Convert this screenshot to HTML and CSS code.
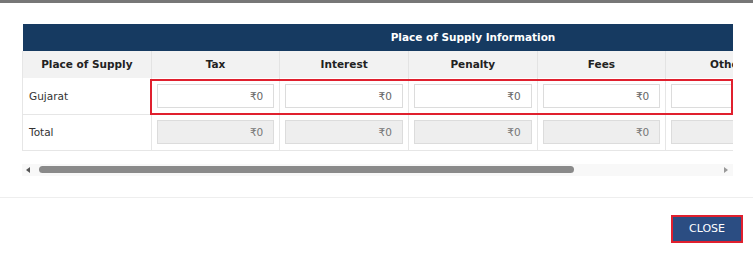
FILE: index.html
```html
<!DOCTYPE html>
<html lang="en">
<head>
  <meta charset="UTF-8">
  <meta name="viewport" content="width=device-width, initial-scale=1.0">
  <title>Place of Supply Information</title>
  <link rel="stylesheet" href="styles.css">
</head>
<body>
  <div class="topbar"></div>

  <div class="modal-body">
    <div class="table-wrap">
      <table class="pos-table">
        <thead>
          <tr>
            <th class="title" colspan="7">Place of Supply Information</th>
          </tr>
          <tr class="cols">
            <th class="first">Place of Supply</th>
            <th>Tax</th>
            <th>Interest</th>
            <th>Penalty</th>
            <th>Fees</th>
            <th>Others</th>
            <th>Total</th>
          </tr>
        </thead>
        <tbody>
          <tr>
            <td class="first">Gujarat</td>
            <td><input type="text" value="₹0"></td>
            <td><input type="text" value="₹0"></td>
            <td><input type="text" value="₹0"></td>
            <td><input type="text" value="₹0"></td>
            <td><input type="text" value="₹0"></td>
            <td><input type="text" value="₹0" disabled></td>
          </tr>
          <tr>
            <td class="first">Total</td>
            <td><input type="text" value="₹0" disabled></td>
            <td><input type="text" value="₹0" disabled></td>
            <td><input type="text" value="₹0" disabled></td>
            <td><input type="text" value="₹0" disabled></td>
            <td><input type="text" value="₹0" disabled></td>
            <td><input type="text" value="₹0" disabled></td>
          </tr>
        </tbody>
      </table>
      <div class="highlight"></div>
    </div>

    <div class="scrollbar">
      <span class="arrow left"></span>
      <div class="track"><div class="thumb"></div></div>
      <span class="arrow right"></span>
    </div>
  </div>

  <div class="modal-footer">
    <button class="btn-close">CLOSE</button>
  </div>
</body>
</html>
```

FILE: styles.css
```css
body {
  font-family: "DejaVu Sans", Verdana, sans-serif;
  font-size: 10px;
  color: #333;
  background: #fff;
  margin: 0;
  padding: 0;
}
.topbar {
  height: 3px;
  background: #777;
}
.modal-body {
  padding: 21px 20px 0 22px;
  border-bottom: 1px solid #eee;
  padding-bottom: 21px;
}
.table-wrap {
  position: relative;
  overflow: hidden;
}
.pos-table {
  border-collapse: collapse;
  table-layout: fixed;
  width: 902px;
}
.pos-table th,
.pos-table td {
  width: 129px;
  box-sizing: border-box;
}
.pos-table .first {
  width: 128px;
}
.pos-table th.title {
  background: #163a61;
  color: #fff;
  font-weight: bold;
  font-size: 10.5px;
  height: 27px;
  padding: 0 0 1px;
  text-align: center;
}
.cols th {
  background: #f2f2f2;
  height: 27px;
  padding: 0 0 1px;
  font-weight: bold;
  font-size: 10.5px;
  color: #222;
  border-left: 1px solid #e3e3e3;
}
.cols th.first {
  border-left: 1px solid #e6e6e6;
}
.pos-table td {
  height: 36px;
  padding: 5px;
  border: 1px solid #e6e6e6;
  border-top: none;
}
.pos-table td.first {
  padding-left: 6px;
  font-size: 10.5px;
  color: #333;
}
.pos-table input {
  width: 100%;
  height: 24px;
  box-sizing: border-box;
  border: 1px solid #dcdcdc;
  background: #fff;
  text-align: right;
  font-family: "DejaVu Sans", Verdana, sans-serif;
  font-size: 10.5px;
  color: #666;
  padding: 0 10px 0 4px;
}
.pos-table input:disabled {
  background: #eee;
  color: #777;
}
.highlight {
  position: absolute;
  left: 128px;
  right: 0;
  top: 55px;
  height: 36px;
  border: 2px solid #e0202e;
  box-sizing: border-box;
}
.scrollbar {
  display: flex;
  align-items: center;
  margin-top: 13px;
  height: 12px;
  background: #f8f8f8;
}
.arrow {
  width: 0;
  height: 0;
  border-top: 3px solid transparent;
  border-bottom: 3px solid transparent;
}
.arrow.left {
  border-right: 4px solid #555;
  margin: 0 9px 0 4px;
}
.arrow.right {
  border-left: 4px solid #999;
  margin: 0 5px 0 9px;
}
.track {
  flex: 1;
}
.thumb {
  width: 535px;
  height: 7px;
  background: #8a8a8a;
  border-radius: 4px;
}
.modal-footer {
  display: flex;
  justify-content: flex-end;
  padding: 17px 10px 0 0;
}
.btn-close {
  width: 72px;
  height: 28px;
  background: #2b4d82;
  color: #fff;
  border: 2px solid #e0202e;
  font-family: "DejaVu Sans", Verdana, sans-serif;
  font-size: 11px;
  padding: 0;
  cursor: pointer;
}
```
